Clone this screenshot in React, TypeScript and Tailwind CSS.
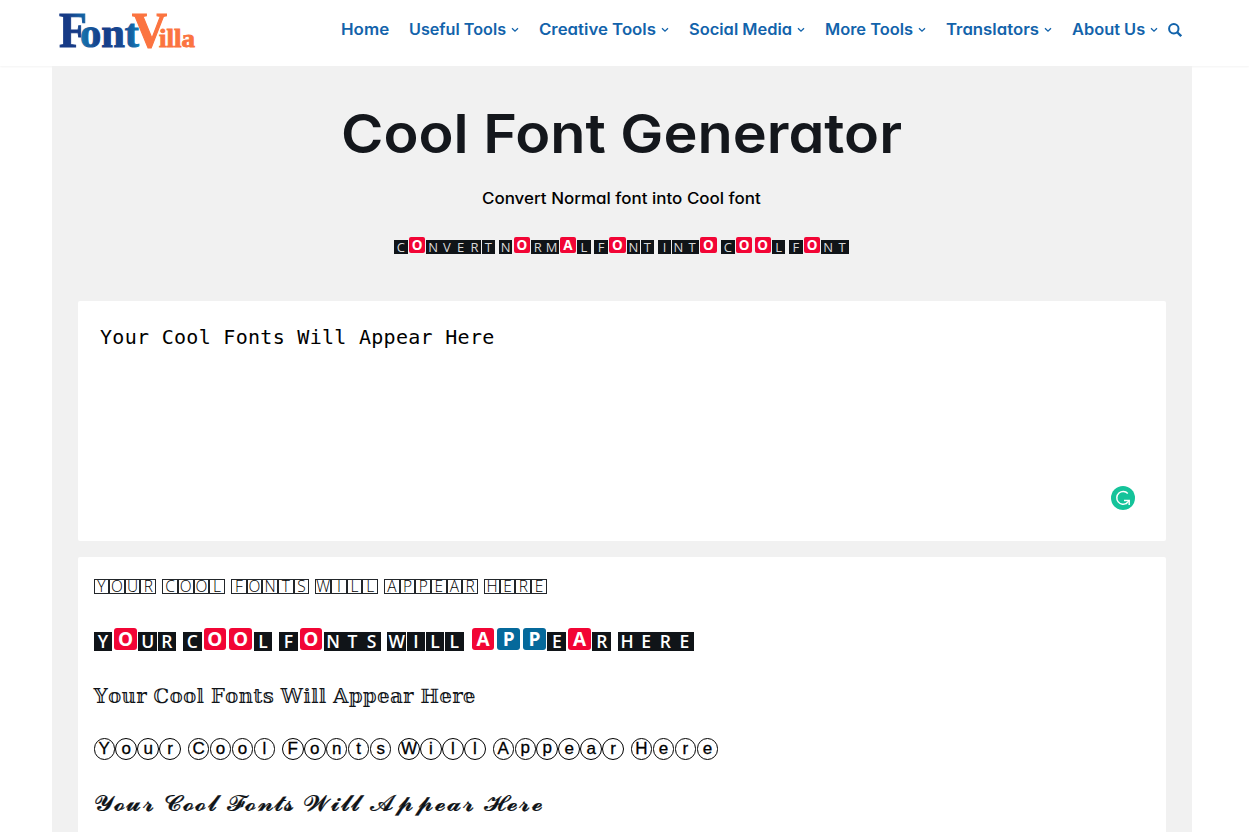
import { useLayoutEffect, useRef, useState } from "react";
import clsx from "clsx";

type NavItem = { label: string; width: number; menu?: boolean };

const NAV: NavItem[] = [
  { label: "Home", width: 48 },
  { label: "Useful Tools", width: 97, menu: true },
  { label: "Creative Tools", width: 117, menu: true },
  { label: "Social Media", width: 103, menu: true },
  { label: "More Tools", width: 88, menu: true },
  { label: "Translators", width: 93, menu: true },
  { label: "About Us", width: 73, menu: true },
];

const SAMPLE = "Your Cool Fonts Will Appear Here";

// Fits a line of text to an exact width, by tracking or by widening the letters
function FitText({
  text,
  width,
  className,
  stretch = false,
}: {
  text: string;
  width: number;
  className?: string;
  stretch?: boolean;
}) {
  const ref = useRef<HTMLSpanElement>(null);
  const [natural, setNatural] = useState(width);

  useLayoutEffect(() => {
    if (ref.current) setNatural(ref.current.offsetWidth);
  }, [text]);

  const style = stretch
    ? { transform: `scaleX(${width / natural})` }
    : { letterSpacing: (width - natural) / ([...text].length - 1) };

  return (
    <span className="block whitespace-nowrap" style={{ width }}>
      <span ref={ref} className={clsx("inline-block origin-left", className)} style={style}>
        {text}
      </span>
    </span>
  );
}

function Chevron() {
  return (
    <svg viewBox="0 0 8 6" className="ml-[5px] mt-px h-1.5 w-2" fill="none">
      <path d="M1 1.2 4 4.2 7 1.2" stroke="#1263ab" strokeWidth="1.3" />
    </svg>
  );
}

function Logo() {
  return (
    <svg viewBox="0 0 140 44" className="h-11 w-[140px] overflow-visible" aria-label="FontVilla">
      <defs>
        <linearGradient id="blue" gradientUnits="userSpaceOnUse" x1="8" y1="30" x2="40" y2="10">
          <stop offset="0.35" stopColor="#163a86" />
          <stop offset="1" stopColor="#1286bd" />
        </linearGradient>
        <linearGradient id="blueWide" gradientUnits="userSpaceOnUse" x1="24" y1="0" x2="84" y2="0">
          <stop offset="0" stopColor="#1675ae" />
          <stop offset="0.3" stopColor="#163a86" />
          <stop offset="0.7" stopColor="#174a93" />
          <stop offset="1" stopColor="#1286bd" />
        </linearGradient>
      </defs>
      <g fontFamily="'Liberation Serif', serif" fontWeight="700">
        <text x="1" y="38.5" fontSize="51" textLength="28" lengthAdjust="spacingAndGlyphs" fill="url(#blue)" stroke="url(#blue)" strokeWidth="1">F</text>
        <text x="22" y="38.5" fontSize="40" textLength="59" lengthAdjust="spacingAndGlyphs" fill="url(#blueWide)" stroke="url(#blueWide)" strokeWidth="1">ont</text>
        <g fill="#fb7440" stroke="#fb7440">
          <text x="74" y="38.5" fontSize="51" textLength="35" lengthAdjust="spacingAndGlyphs" strokeWidth="1.2">V</text>
          <text x="101" y="38.5" fontSize="26" textLength="36" lengthAdjust="spacingAndGlyphs" strokeWidth="0.9">illa</text>
        </g>
      </g>
    </svg>
  );
}

function Header() {
  return (
    <header className="flex h-[66px] items-start bg-white pl-[58px] shadow-[0_1px_2px_rgba(0,0,0,0.05)]">
      <div className="mt-2 w-[282.5px]">
        <Logo />
      </div>
      <nav className="mt-[17px] flex h-6 items-center gap-5 text-[#1263ab]">
        {NAV.map((item) => (
          <a key={item.label} className="flex items-center">
            <FitText
              text={item.label}
              width={item.width}
              stretch
              className="font-['Inter'] text-[15.5px] leading-6 font-semibold [font-feature-settings:'cv11']"
            />
            {item.menu && <Chevron />}
          </a>
        ))}
      </nav>
      <svg viewBox="0 0 14 14" className="mt-[23px] ml-2.5 size-3.5" fill="none" stroke="#1263ab">
        <circle cx="5.8" cy="5.8" r="4.7" strokeWidth="2" />
        <path d="m9.2 9.2 4 4" strokeWidth="2.3" />
      </svg>
    </header>
  );
}

function TileText({ text, large = false }: { text: string; large?: boolean }) {
  const signs = large ? "OAP" : "OA";
  return (
    <span className={clsx("flex items-end font-['Open_Sans']", large ? "gap-[6.2px]" : "gap-[3.4px]")}>
      {text.split(" ").map((word, w) => (
        <span key={w} className="flex items-end">
          {word.split("").map((letter, i) =>
            signs.includes(letter) ? (
              <span
                key={i}
                className={clsx("mb-px flex justify-center", large ? "w-[25.8px]" : "w-[18.5px]")}
              >
                <span
                  className={clsx(
                    "flex items-center justify-center font-bold text-white",
                    large
                      ? "h-[22px] w-[22.6px] rounded-[3px] text-[19px] leading-[22px]"
                      : "h-4 w-[16.2px] rounded-[2px] text-[13.5px] leading-4",
                    letter === "P" ? "bg-[#05699b]" : "bg-[#f20535]",
                  )}
                >
                  {letter}
                </span>
              </span>
            ) : (
              <span key={i} className={large ? "w-[19.13px]" : "w-[13.82px]"}>
                <span
                  className={clsx(
                    "flex items-center justify-center bg-[#101418]",
                    large
                      ? "mr-[0.3px] h-[19px] text-[17.5px] leading-[19px] font-semibold text-white"
                      : "mr-[0.2px] h-3.5 text-[13px] leading-3.5 text-[#d8d8d8]",
                  )}
                >
                  {letter}
                </span>
              </span>
            ),
          )}
        </span>
      ))}
    </span>
  );
}

function SquaredText({ text }: { text: string }) {
  return (
    <span className="flex gap-[6.2px]">
      {text.split(" ").map((word, w) => (
        <span key={w} className="flex">
          {word.split("").map((letter, i) => (
            <span key={i} className="w-[15.65px]">
              <span className="flex h-[15px] items-center justify-center border border-[#22262a] font-['Open_Sans'] text-[15.5px] leading-[13px] font-light text-black">
                {letter}
              </span>
            </span>
          ))}
        </span>
      ))}
    </span>
  );
}

function CircledText({ text }: { text: string }) {
  return (
    <span className="flex gap-[6.4px]">
      {text.split(" ").map((word, w) => (
        <span key={w} className="flex">
          {word.split("").map((letter, i) => (
            <span key={i} className="w-[21.98px]">
              <span
                className={clsx(
                  "flex size-[21.5px] justify-center rounded-full border border-black font-['Liberation_Sans'] text-[17px] text-black [-webkit-text-stroke:0.3px_black]",
                  letter === "p" ? "leading-[17px]" : "leading-[20px]",
                )}
              >
                {letter}
              </span>
            </span>
          ))}
        </span>
      ))}
    </span>
  );
}

function GrammarBadge() {
  return (
    <svg viewBox="0 0 24 24" className="absolute right-[31px] bottom-[31px] size-6" fill="none">
      <circle cx="12" cy="12" r="12" fill="#15c39a" />
      <path d="M16.8 7.4A6.4 6.4 0 1 0 16 17M13 14.6h5.2v4.4" stroke="#fff" strokeWidth="1.5" />
      <path d="m17.8 15-3 3" stroke="#fff" strokeWidth="1.3" />
    </svg>
  );
}

export default function App() {
  return (
    <div className="h-[832px] overflow-hidden bg-white">
      <Header />
      <main className="ml-[52px] h-[766px] w-[1140px] bg-[#f1f1f1] px-[26px]">
        <div className="flex h-[235px] flex-col items-center text-[#14171c]">
          <h1 className="mt-[33px] mr-px">
            <FitText
              text="Cool Font Generator"
              width={561}
              stretch
              className="font-['Inter'] text-[54px] leading-[70px] font-semibold [font-feature-settings:'cv11']"
            />
          </h1>
          <h2 className="mt-[17px] mr-px">
            <FitText
              text="Convert Normal font into Cool font"
              width={279}
              stretch
              className="font-['Inter'] text-[15.5px] leading-6 font-medium text-black [font-feature-settings:'cv11']"
            />
          </h2>
          <div className="mt-[26px] mr-px">
            <TileText text="CONVERT NORMAL FONT INTO COOL FONT" />
          </div>
        </div>

        <section className="relative h-60 rounded-[2px] bg-white pt-[22px] pl-[22px]">
          <FitText
            text={SAMPLE}
            width={394}
            className="font-['DejaVu_Sans_Mono'] text-[20px] leading-7 text-black"
          />
          <GrammarBadge />
        </section>

        <section className="mt-4 h-[300px] rounded-[2px] bg-white pl-[15.5px] text-[#101418]">
          <div className="flex h-[58px] items-center">
            <SquaredText text={SAMPLE.toUpperCase()} />
          </div>
          <div className="flex h-12 items-center">
            <TileText text={SAMPLE.toUpperCase()} large />
          </div>
          <div className="flex h-16 items-center pt-0.5">
            <FitText
              text="𝕐𝕠𝕦𝕣 ℂ𝕠𝕠𝕝 𝔽𝕠𝕟𝕥𝕤 𝕎𝕚𝕝𝕝 𝔸𝕡𝕡𝕖𝕒𝕣 ℍ𝕖𝕣𝕖"
              width={382}
              className="font-['DejaVu_Serif'] text-[20px] leading-8"
            />
          </div>
          <div className="flex h-11 items-center">
            <CircledText text={SAMPLE} />
          </div>
          <div className="flex h-16 items-center pt-0.5">
            <FitText
              text="𝓨𝓸𝓾𝓻 𝓒𝓸𝓸𝓵 𝓕𝓸𝓷𝓽𝓼 𝓦𝓲𝓵𝓵 𝓐𝓹𝓹𝓮𝓪𝓻 𝓗𝓮𝓻𝓮"
              width={450}
              stretch
              className="font-['DejaVu_Serif'] text-[22px] leading-8 tracking-[1px] [-webkit-text-stroke:0.2px_#101418]"
            />
          </div>
        </section>
      </main>
    </div>
  );
}
